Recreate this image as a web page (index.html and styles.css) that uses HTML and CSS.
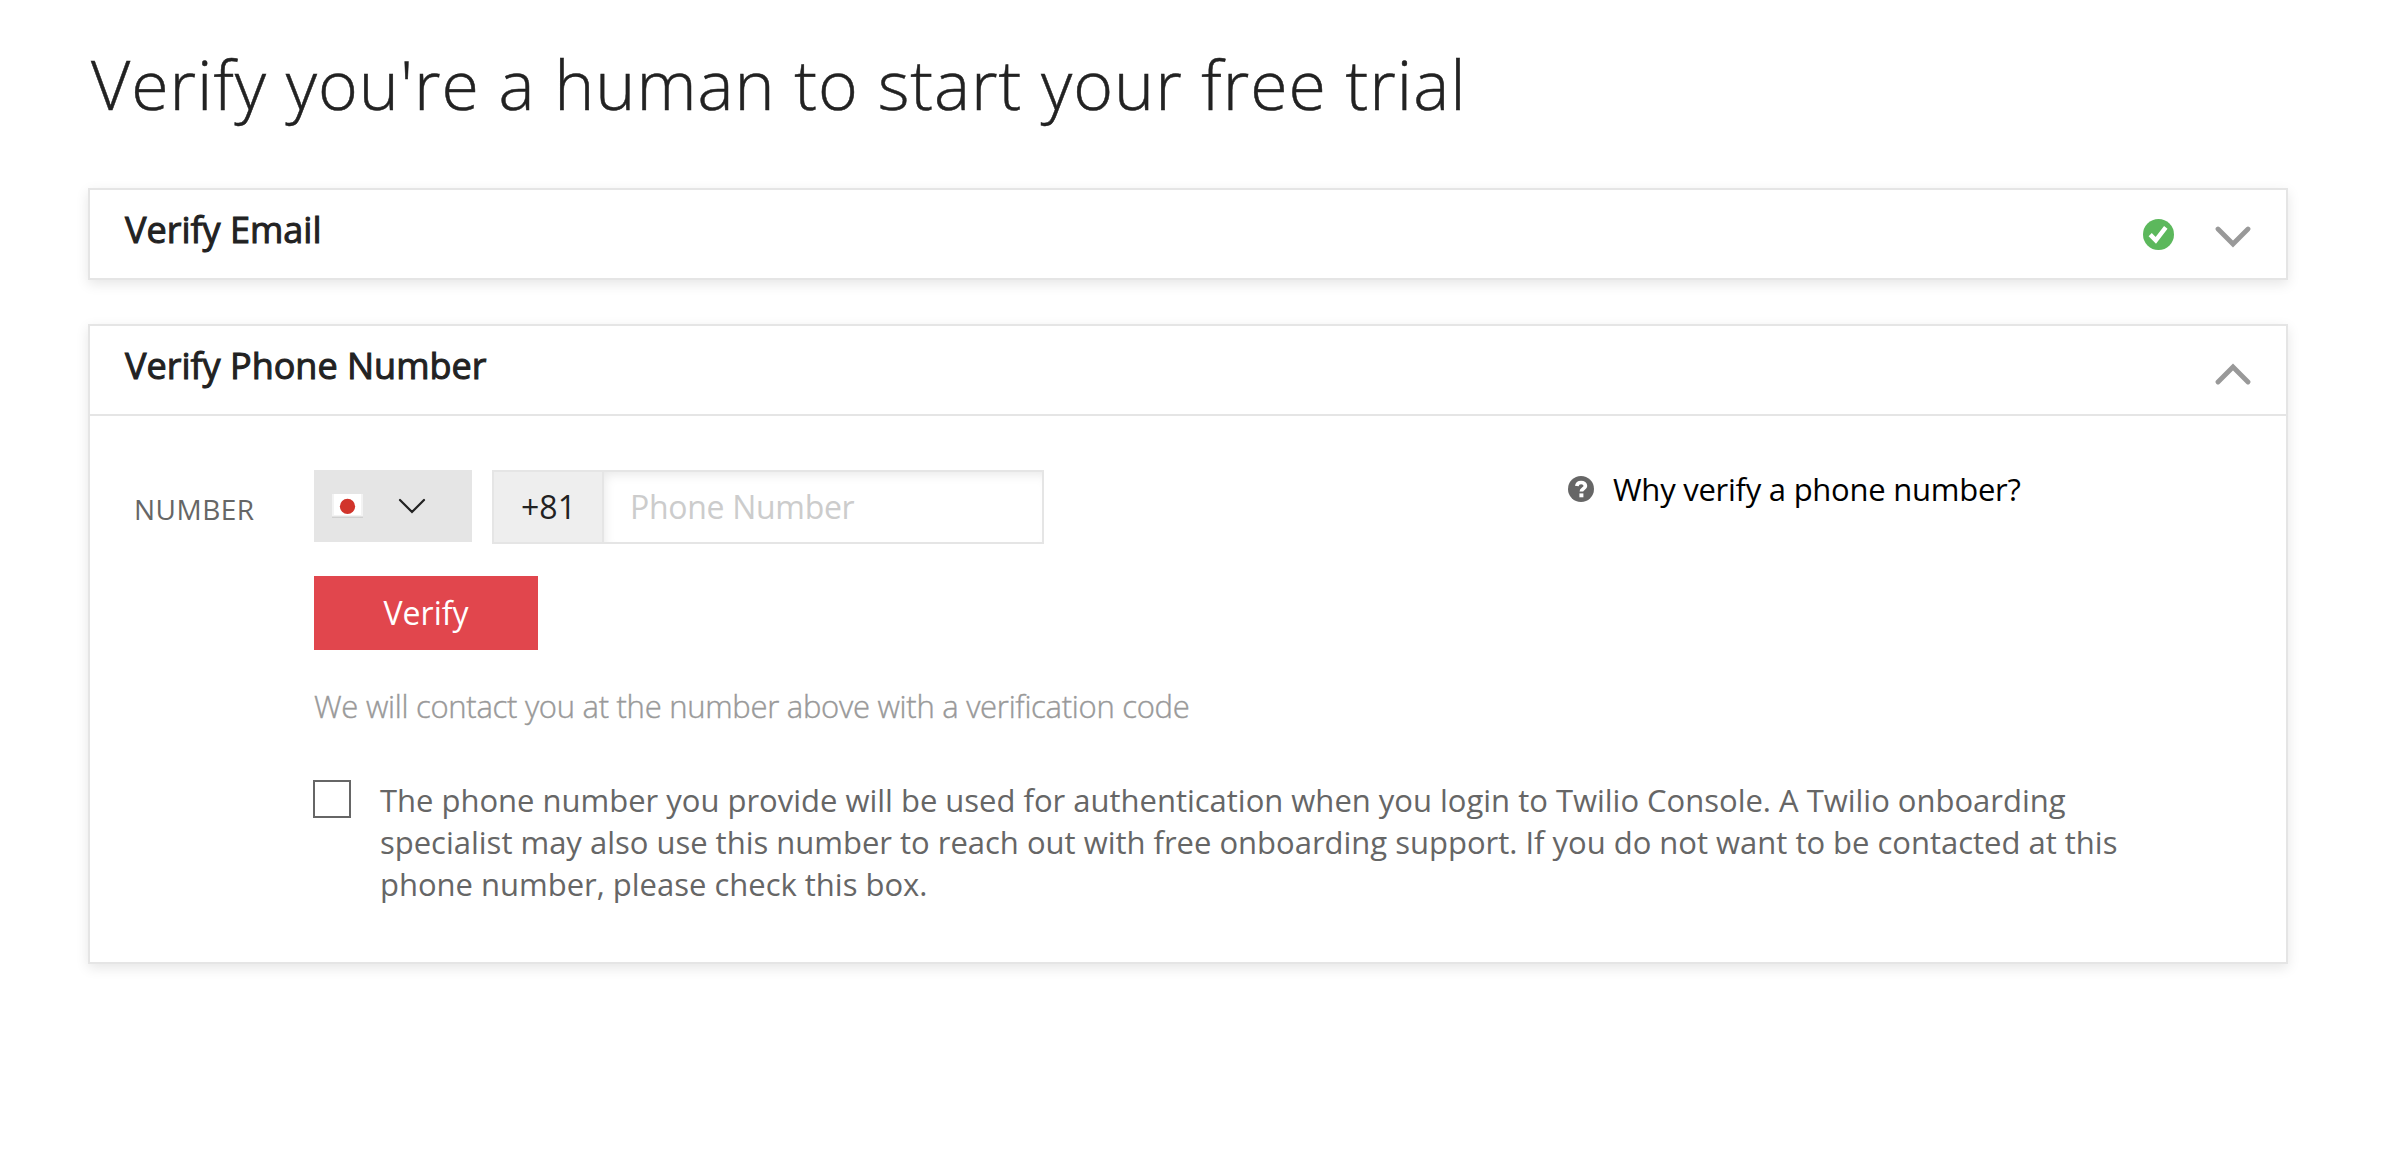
FILE: index.html
```html
<!DOCTYPE html>
<html lang="en">
<head>
<meta charset="utf-8">
<title>Verify you're a human</title>
<link rel="stylesheet" href="styles.css">
</head>
<body>
<main class="page">
  <h1 class="title">Verify you're a human to start your free trial</h1>

  <section class="card">
    <header class="card-header">
      <h2 class="card-title">Verify Email</h2>
      <svg class="icon-done" viewBox="0 0 31 31"><circle cx="15.5" cy="15.5" r="15.5" fill="#5cb85c"/><path d="M7.2 15.6l5.6 5.7L22.8 8.4" fill="none" stroke="#fff" stroke-width="4.4"/></svg>
      <svg class="icon-toggle" viewBox="0 0 36 22"><path d="M3 3l15 15L33 3" fill="none" stroke="#999" stroke-width="4.8" stroke-linecap="round"/></svg>
    </header>
  </section>

  <section class="card card-open">
    <header class="card-header">
      <h2 class="card-title">Verify Phone Number</h2>
      <svg class="icon-toggle icon-toggle-up" viewBox="0 0 36 22"><path d="M3 19l15-15L33 19" fill="none" stroke="#999" stroke-width="4.8" stroke-linecap="round"/></svg>
    </header>
    <div class="card-body">
      <label class="field-label" for="phone">NUMBER</label>
      <div class="form">
        <div class="form-top">
          <div class="phone-row">
            <button class="country" type="button" aria-label="Country">
              <svg class="flag" viewBox="0 0 31 24"><rect width="31" height="24" fill="#d0d0d0"/><rect width="31" height="22.5" fill="#f3f3f3"/><rect x="2" width="27" height="21" fill="#fff"/><circle cx="15.5" cy="12.3" r="7.6" fill="#d1342b"/></svg>
              <svg class="country-arrow" viewBox="0 0 28 16"><path d="M2 2l12 12L26 2" fill="none" stroke="#222" stroke-width="2.2" stroke-linecap="round"/></svg>
            </button>
            <div class="phone-group">
              <span class="prefix">+81</span>
              <input class="phone-input" id="phone" type="text" placeholder="Phone Number">
            </div>
          </div>
          <div class="help">
            <svg class="help-icon" viewBox="0 0 26 26"><circle cx="13" cy="13" r="13" fill="#666"/><path d="M8.8 10.1c.3-2.2 1.9-3.6 4.3-3.6 2.500 0 4.300 1.300 4.300 3.400 0 2.900-4 2.900-4 5.500" fill="none" stroke="#fff" stroke-width="3.700"/><path d="M11.400 17.400h4v3.900h-4z" fill="#fff"/></svg>
            <span class="help-text">Why verify a phone number?</span>
          </div>
        </div>
        <button class="verify" type="button">Verify</button>
        <p class="hint">We will contact you at the number above with a verification code</p>
        <div class="consent">
          <input class="checkbox" id="optout" type="checkbox">
          <label class="consent-text" for="optout">The phone number you provide will be used for authentication when you login to Twilio Console. A Twilio onboarding<br>specialist may also use this number to reach out with free onboarding support. If you do not want to be contacted at this<br>phone number, please check this box.</label>
        </div>
      </div>
    </div>
  </section>
</main>
</body>
</html>
```
FILE: styles.css
```css
* { box-sizing: border-box; }

body {
  margin: 0;
  background: #fff;
  color: #222;
  font-family: "Open Sans", "Noto Sans", sans-serif;
}

.page { min-height: 1152px; padding: 44px 98px 0 88px; }

.title {
  margin: 0 0 64px 3px;
  font-size: 68px;
  font-weight: 300;
  line-height: 80px;
  letter-spacing: 1px;
  white-space: nowrap;
  -webkit-text-stroke: 0.5px #222;
}

.card {
  border: 2px solid #e5e5e5;
  background: #fff;
  box-shadow: 0 4px 12px rgba(0, 0, 0, 0.1);
}

.card-open { height: 640px; margin-top: 44px; }

.card-header {
  display: flex;
  align-items: center;
  height: 88px;
  padding: 0 35px;
}

.card-open .card-header {
  height: 90px;
  border-bottom: 2px solid #e5e5e5;
}

.card-title {
  flex: 1;
  margin: 0;
  padding-bottom: 8px;
  font-size: 36px;
  font-weight: 400;
  line-height: 48px;
  letter-spacing: 0;
  -webkit-text-stroke: 1px #222;
}

.icon-done { width: 31px; height: 31px; margin-right: 41px; }
.icon-toggle { width: 36px; height: 22px; margin-top: 6px; }
.icon-toggle-up { margin-top: 7px; }

.card-body { display: flex; padding: 54px 35px 0 44px; }

.field-label {
  width: 180px;
  padding-top: 19px;
  color: #666;
  font-size: 28px;
  line-height: 40px;
  letter-spacing: 0.5px;
}

.form { flex: 1; }
.form-top { display: flex; align-items: flex-start; }
.phone-row { display: flex; align-items: flex-start; gap: 20px; width: 1254px; }

.country {
  display: flex;
  align-items: center;
  gap: 35px;
  width: 158px;
  height: 72px;
  padding: 0 0 0 18px;
  border: 0;
  background: #e5e5e5;
}

.flag { width: 31px; height: 24px; }
.country-arrow { width: 28px; height: 16px; }

.phone-group {
  display: flex;
  width: 552px;
  height: 74px;
  border: 2px solid #e5e5e5;
}

.prefix {
  width: 110px;
  padding-left: 1px;
  border-right: 2px solid #e5e5e5;
  background: #eee;
  font-size: 32px;
  line-height: 69px;
  text-align: center;
}

.phone-input {
  flex: 1;
  min-width: 0;
  padding: 0 26px 2px;
  border: 0;
  background: #fff;
  box-shadow: inset 4px 6px 12px -4px rgba(0, 0, 0, 0.1);
  color: #222;
  font: 400 32px "Open Sans", sans-serif;
  letter-spacing: -0.3px;
}

.phone-input::placeholder { color: #ccc; opacity: 1; }

.help { display: flex; align-items: center; gap: 19px; height: 38px; }
.help-icon { width: 26px; height: 26px; }

.help-text {
  color: #000;
  font-size: 31px;
  line-height: 38px;
  letter-spacing: -0.25px;
  white-space: nowrap;
}

.verify {
  display: block;
  width: 224px;
  height: 74px;
  margin-top: 32px;
  padding: 0 0 2px;
  border: 0;
  background: #e1464d;
  color: #fff;
  font: 400 32px "Open Sans", sans-serif;
}

.hint {
  margin: 36px 0 0;
  color: #999;
  font-size: 31px;
  font-weight: 300;
  line-height: 40px;
  letter-spacing: -0.28px;
  -webkit-text-stroke: 0.4px #999;
}

.consent { display: flex; align-items: flex-start; margin-top: 53px; }

.checkbox {
  appearance: none;
  width: 38px;
  height: 38px;
  margin: 1px 29px 0 -1px;
  border: 2px solid #666;
  background: #fff;
}

.consent-text {
  color: #666;
  font-size: 31px;
  line-height: 42px;
  letter-spacing: -0.01px;
  white-space: nowrap;
}
```
